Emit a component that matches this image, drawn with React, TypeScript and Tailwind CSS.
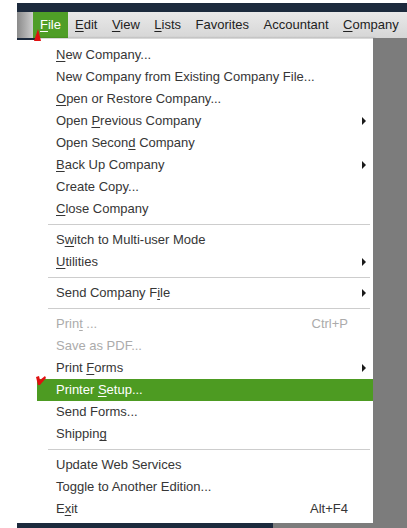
import React from 'react'

type Item =
  | { sep: true }
  | {
      sep?: false
      label: string
      shortcut?: string
      sub?: boolean
      disabled?: boolean
      active?: boolean
    }

// "&" marks the mnemonic letter that gets underlined
const items: Item[] = [
  { label: '&New Company...' },
  { label: 'New Company from Existing Company File...' },
  { label: '&Open or Restore Company...' },
  { label: 'Open &Previous Company', sub: true },
  { label: 'Open Secon&d Company' },
  { label: '&Back Up Company', sub: true },
  { label: 'Create Copy...' },
  { label: '&Close Company' },
  { sep: true },
  { label: 'S&witch to Multi-user Mode' },
  { label: '&Utilities', sub: true },
  { sep: true },
  { label: 'Send Company F&ile', sub: true },
  { sep: true },
  { label: 'Prin&t ...', shortcut: 'Ctrl+P', disabled: true },
  { label: 'Save as PDF...', disabled: true },
  { label: 'Print &Forms', sub: true },
  { label: 'Printer &Setup...', active: true },
  { label: 'Send Forms...' },
  { label: 'Shippin&g' },
  { sep: true },
  { label: 'Update Web Services' },
  { label: 'Toggle to Another Edition...' },
  { label: 'E&xit', shortcut: 'Alt+F4' },
]

const Mnemonic = ({ text }: { text: string }) => {
  const i = text.indexOf('&')
  if (i < 0) return <>{text}</>
  return (
    <>
      {text.slice(0, i)}
      <span className="underline underline-offset-2">{text[i + 1]}</span>
      {text.slice(i + 2)}
    </>
  )
}

const Arrow = ({ light }: { light?: boolean }) => (
  <svg width="4" height="8" viewBox="0 0 4 8" className="mr-[7px]">
    <path d="M0 0 L4 4 L0 8 Z" fill={light ? '#ffffff' : '#1a1a1a'} />
  </svg>
)

const MenuRow = ({ item }: { item: Item }) => {
  if (item.sep) {
    return (
      <div className="flex h-[9px] items-center pl-[11px] pr-[3px]">
        <div className="h-px w-full bg-[#cdcdcd]" />
      </div>
    )
  }
  const color = item.active
    ? 'bg-[#4d9b22] text-white'
    : item.disabled
      ? 'text-[#ababab]'
      : 'text-[#363636]'
  return (
    <div className={`flex h-[22px] items-center pl-[19px] ${color}`}>
      <span className="flex-1 whitespace-nowrap">
        <Mnemonic text={item.label} />
      </span>
      {item.shortcut && <span className="mr-[25px]">{item.shortcut}</span>}
      {item.sub && <Arrow light={item.active} />}
    </div>
  )
}

const topMenus = ['&Edit', '&View', '&Lists', 'Favorites', 'Accountant', '&Company']

export default function App() {
  return (
    <div
      className="relative h-[528px] w-[407px] overflow-hidden bg-white text-[13px]"
      style={{ fontFamily: '"Liberation Sans", Arial, sans-serif' }}
    >
      <div className="flex h-full flex-col pl-[17px] pt-[3px]">
        {/* Title strip */}
        <div className="h-[9px] bg-[#1c2a3d]" />

        {/* Menu bar */}
        <div className="flex h-[26px] items-center bg-gradient-to-b from-[#e9e9e9] to-[#d6d6d6] text-[#222]">
          <div className="h-full w-[16px] bg-gradient-to-r from-[#8a8a8a] to-[#cdcdcd]" />
          <div className="flex h-full w-[35px] items-center bg-[#4f9e27] pl-[7px] text-white">
            <Mnemonic text="&File" />
          </div>
          <div className="ml-[7px] flex gap-[14.5px] whitespace-nowrap">
            {topMenus.map((m) => (
              <span key={m}>
                <Mnemonic text={m} />
              </span>
            ))}
          </div>
        </div>

        {/* Body */}
        <div className="flex flex-1">
          <div className="flex w-[356px] flex-col">
            <div className="flex flex-1">
              <div className="w-[20px] border-t-2 border-[#1c2a3d] bg-white" />
              <div className="flex w-[336px] flex-col border-t border-[#d8d8d8] bg-white pt-[5px] shadow-[2px_0_2px_rgba(0,0,0,0.25)]">
                {items.map((it, i) => (
                  <MenuRow key={i} item={it} />
                ))}
              </div>
            </div>
            <div className="flex h-[5px]">
              <div className="w-[256px] bg-[#1c2a3d]" />
              <div className="flex-1 bg-[#7c7c7c]" />
            </div>
          </div>
          <div className="flex-1 bg-[#7c7c7c]" />
        </div>
      </div>

      {/* Red annotation marks */}
      <svg className="absolute left-[34px] top-[29px]" width="7" height="12" viewBox="0 0 7 12">
        <path d="M4 0 L7 12 L0 12 Z" fill="#e01010" />
      </svg>
      <svg className="absolute left-[36px] top-[376px]" width="10" height="9" viewBox="0 0 10 9">
        <path d="M0 1 L3 0 L4 4 L9 0 L10 2 L4 9 L2 9 Z" fill="#e01010" />
      </svg>
    </div>
  )
}
